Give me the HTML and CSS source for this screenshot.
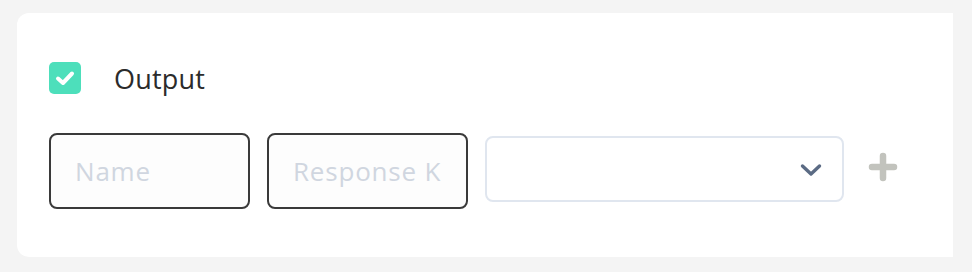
FILE: index.html
```html
<!DOCTYPE html>
<html>
<head>
<meta charset="utf-8">
<link rel="stylesheet" href="styles.css">
</head>
<body>
<div class="card">
  <label class="check-row">
    <span class="checkbox">
      <svg width="22" height="22" viewBox="0 0 22 22"><path d="M4 11.5 L9 16 L18 6.5" fill="none" stroke="#fff" stroke-width="4" stroke-linecap="round" stroke-linejoin="round"/></svg>
    </span>
    <span class="check-label">Output</span>
  </label>
  <div class="fields">
    <input class="field" type="text" placeholder="Name">
    <input class="field" type="text" placeholder="Response Key">
    <div class="select">
      <svg class="chevron" width="22" height="14" viewBox="0 0 22 14"><path d="M2.5 3 L11 11 L19.5 3" fill="none" stroke="#5b6b84" stroke-width="3.4" stroke-linecap="round" stroke-linejoin="round"/></svg>
    </div>
    <button class="add" type="button" aria-label="Add">
      <svg width="30" height="30" viewBox="0 0 30 30"><path d="M15 4 V26 M4 15 H26" fill="none" stroke="#c2c3bd" stroke-width="6.5" stroke-linecap="round"/></svg>
    </button>
  </div>
</div>
</body>
</html>
```
FILE: styles.css
```css
html, body {
  margin: 0;
  padding: 0;
  background: #f4f4f4;
}
body {
  padding: 13px 19px 15px 17px;
  font-family: "Open Sans", "Noto Sans", sans-serif;
}
.card {
  background: #ffffff;
  border-radius: 12px 0 0 12px;
  padding: 46px 32px 48px 32px;
  height: 244px;
  box-sizing: border-box;
}
.check-row {
  display: flex;
  align-items: center;
  gap: 33px;
  height: 38px;
}
.checkbox {
  width: 32px;
  height: 32px;
  border-radius: 5px;
  background: #4ddfbb;
  display: flex;
  align-items: center;
  justify-content: center;
}
.check-label {
  font-size: 27px;
  font-weight: 500;
  color: #2b2b2b;
  letter-spacing: 0.2px;
}
.fields {
  display: flex;
  align-items: flex-start;
  gap: 17px;
  margin-top: 36px;
}
.field {
  width: 201px;
  height: 76px;
  box-sizing: border-box;
  border: 2px solid #3a3a3a;
  border-radius: 8px;
  padding: 0 24px;
  font-family: "Open Sans", "Noto Sans", sans-serif;
  font-size: 26px;
  font-weight: 500;
  letter-spacing: 0.8px;
  background: #fdfdfd;
  outline: none;
  color: #2b2b2b;
}
.field::placeholder {
  color: #d0d6e0;
}
.select {
  width: 359px;
  height: 66px;
  box-sizing: border-box;
  border: 2px solid #e0e6ef;
  border-radius: 8px;
  margin-top: 3px;
  display: flex;
  align-items: center;
  justify-content: flex-end;
  padding-right: 20px;
}
.chevron {
  margin-top: 1px;
}
.add {
  border: none;
  background: none;
  padding: 0;
  margin-top: 19px;
  margin-left: 7px;
  width: 30px;
  height: 30px;
  display: flex;
}
```
